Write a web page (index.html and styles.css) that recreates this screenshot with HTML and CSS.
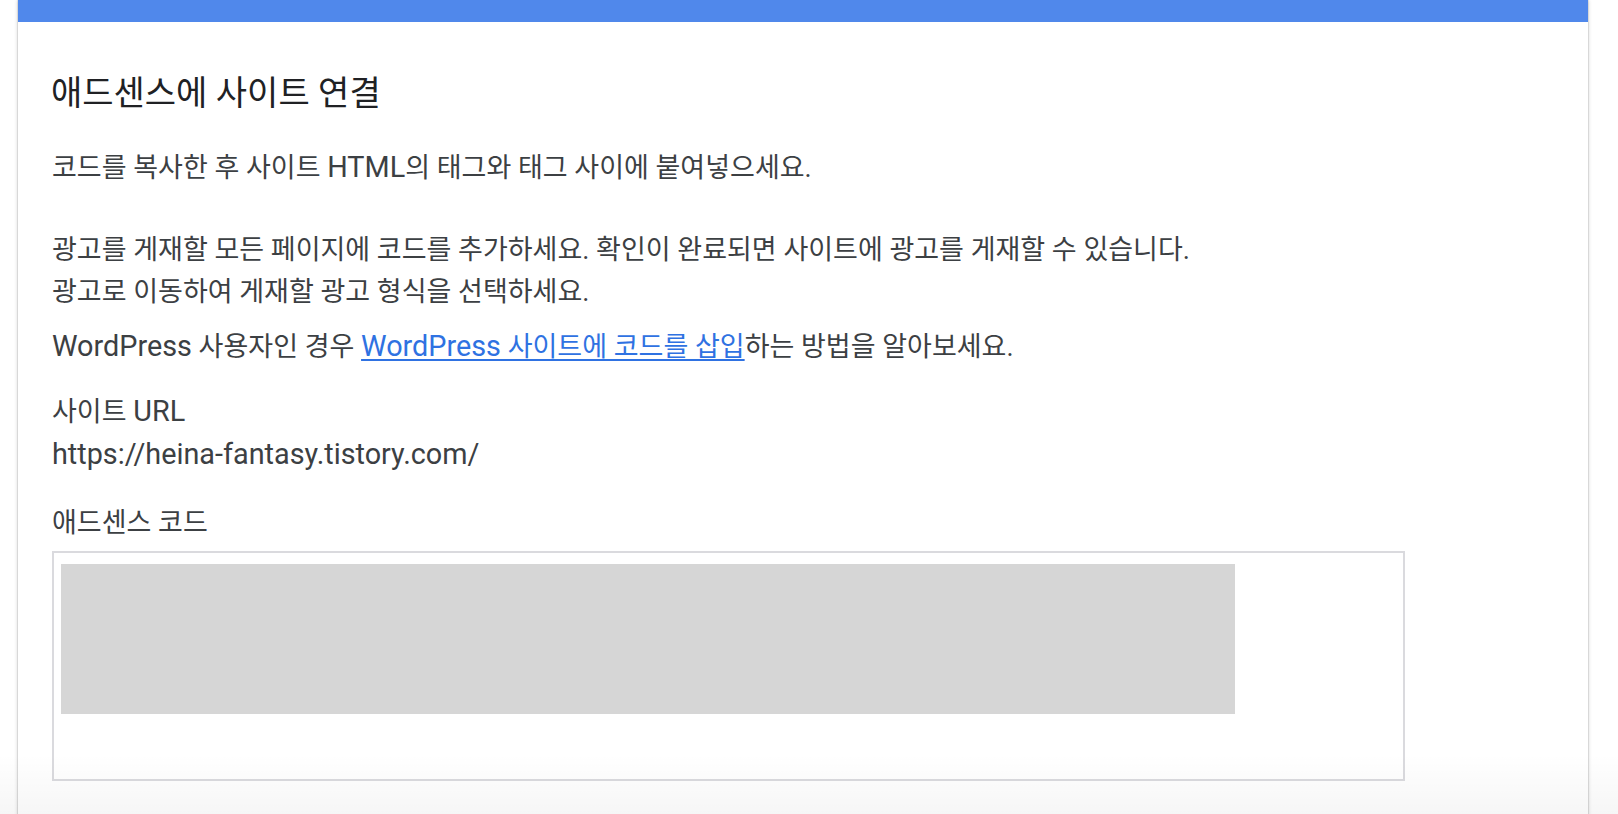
FILE: index.html
```html
<!DOCTYPE html>
<html lang="ko">
<head>
<meta charset="utf-8">
<title>애드센스에 사이트 연결</title>
<link rel="stylesheet" href="styles.css">
</head>
<body>
<div class="page">
  <main class="card">
    <div class="card-bar"></div>
    <div class="card-body">
      <h1 class="title">애드센스에 사이트 연결</h1>
      <p class="para p1">코드를 복사한 후 사이트 <span class="lat">HTML</span>의 태그와 태그 사이에 붙여넣으세요.</p>
      <p class="para p2">광고를 게재할 모든 페이지에 코드를 추가하세요. 확인이 완료되면 사이트에 광고를 게재할 수 있습니다.<br>광고로 이동하여 게재할 광고 형식을 선택하세요.</p>
      <p class="para p3"><span class="lat">WordPress</span> 사용자인 경우 <a class="link" href="#"><span class="lat">WordPress</span> 사이트에 코드를 삽입</a>하는 방법을 알아보세요.</p>
      <div class="field">
        <div class="field-label url-label">사이트 <span class="lat">URL</span></div>
        <div class="field-value">https://heina-fantasy.tistory.com/</div>
      </div>
      <div class="field code-field">
        <div class="field-label">애드센스 코드</div>
        <div class="code-box">
          <div class="code-redacted"></div>
        </div>
      </div>
    </div>
  </main>
  <div class="bottom-fade"></div>
</div>
</body>
</html>
```
FILE: styles.css
```css
html, body {
  margin: 0;
  padding: 0;
  height: 100%;
  overflow: hidden;
}

body {
  background: #ffffff;
  font-family: Roboto, "Noto Sans CJK KR", sans-serif;
  color: #3c4043;
}

.page {
  position: relative;
  height: 100%;
  padding-left: 18px;
}

.card {
  width: 1570px;
  min-height: 900px;
  background: #ffffff;
  box-shadow: 0 0 0 1px rgba(0, 0, 0, 0.07), 0 0 4px rgba(0, 0, 0, 0.22);
}

.card-bar {
  height: 22px;
  background: #5088eb;
}

.card-body {
  padding: 51px 34px 0 34px;
}

.title {
  margin: 0 0 35px -1px;
  font-size: 34px;
  line-height: 40px;
  font-weight: 400;
  color: #202124;
}

.para {
  margin: 0;
  font-size: 27px;
  line-height: 41px;
}

.lat {
  font-size: 28.8px;
  line-height: 1;
}

.p1 {
  margin-bottom: 40px;
}

.p2 {
  line-height: 42px;
  margin-bottom: 14px;
}

.p3 {
  margin-bottom: 23px;
}

.link {
  color: #2f72e2;
  text-decoration: underline;
  text-underline-offset: 3px;
  text-decoration-thickness: 2px;
}

.field {
  font-size: 27px;
  line-height: 41px;
}

.url-label {
  line-height: 43px;
}

.field-value {
  font-size: 28.8px;
  line-height: 41px;
}

.code-field {
  margin-top: 28px;
}

.code-field .field-label {
  margin-bottom: 7px;
}

.code-box {
  box-sizing: border-box;
  width: 1353px;
  height: 230px;
  border: 2px solid #dadade;
  padding: 11px 7px;
}

.code-redacted {
  width: 1174px;
  height: 150px;
  background: #d6d6d6;
}

.bottom-fade {
  position: absolute;
  left: 0;
  right: 0;
  bottom: 0;
  height: 60px;
  background: linear-gradient(to bottom, rgba(0, 0, 0, 0), rgba(0, 0, 0, 0.035));
  pointer-events: none;
}
```
